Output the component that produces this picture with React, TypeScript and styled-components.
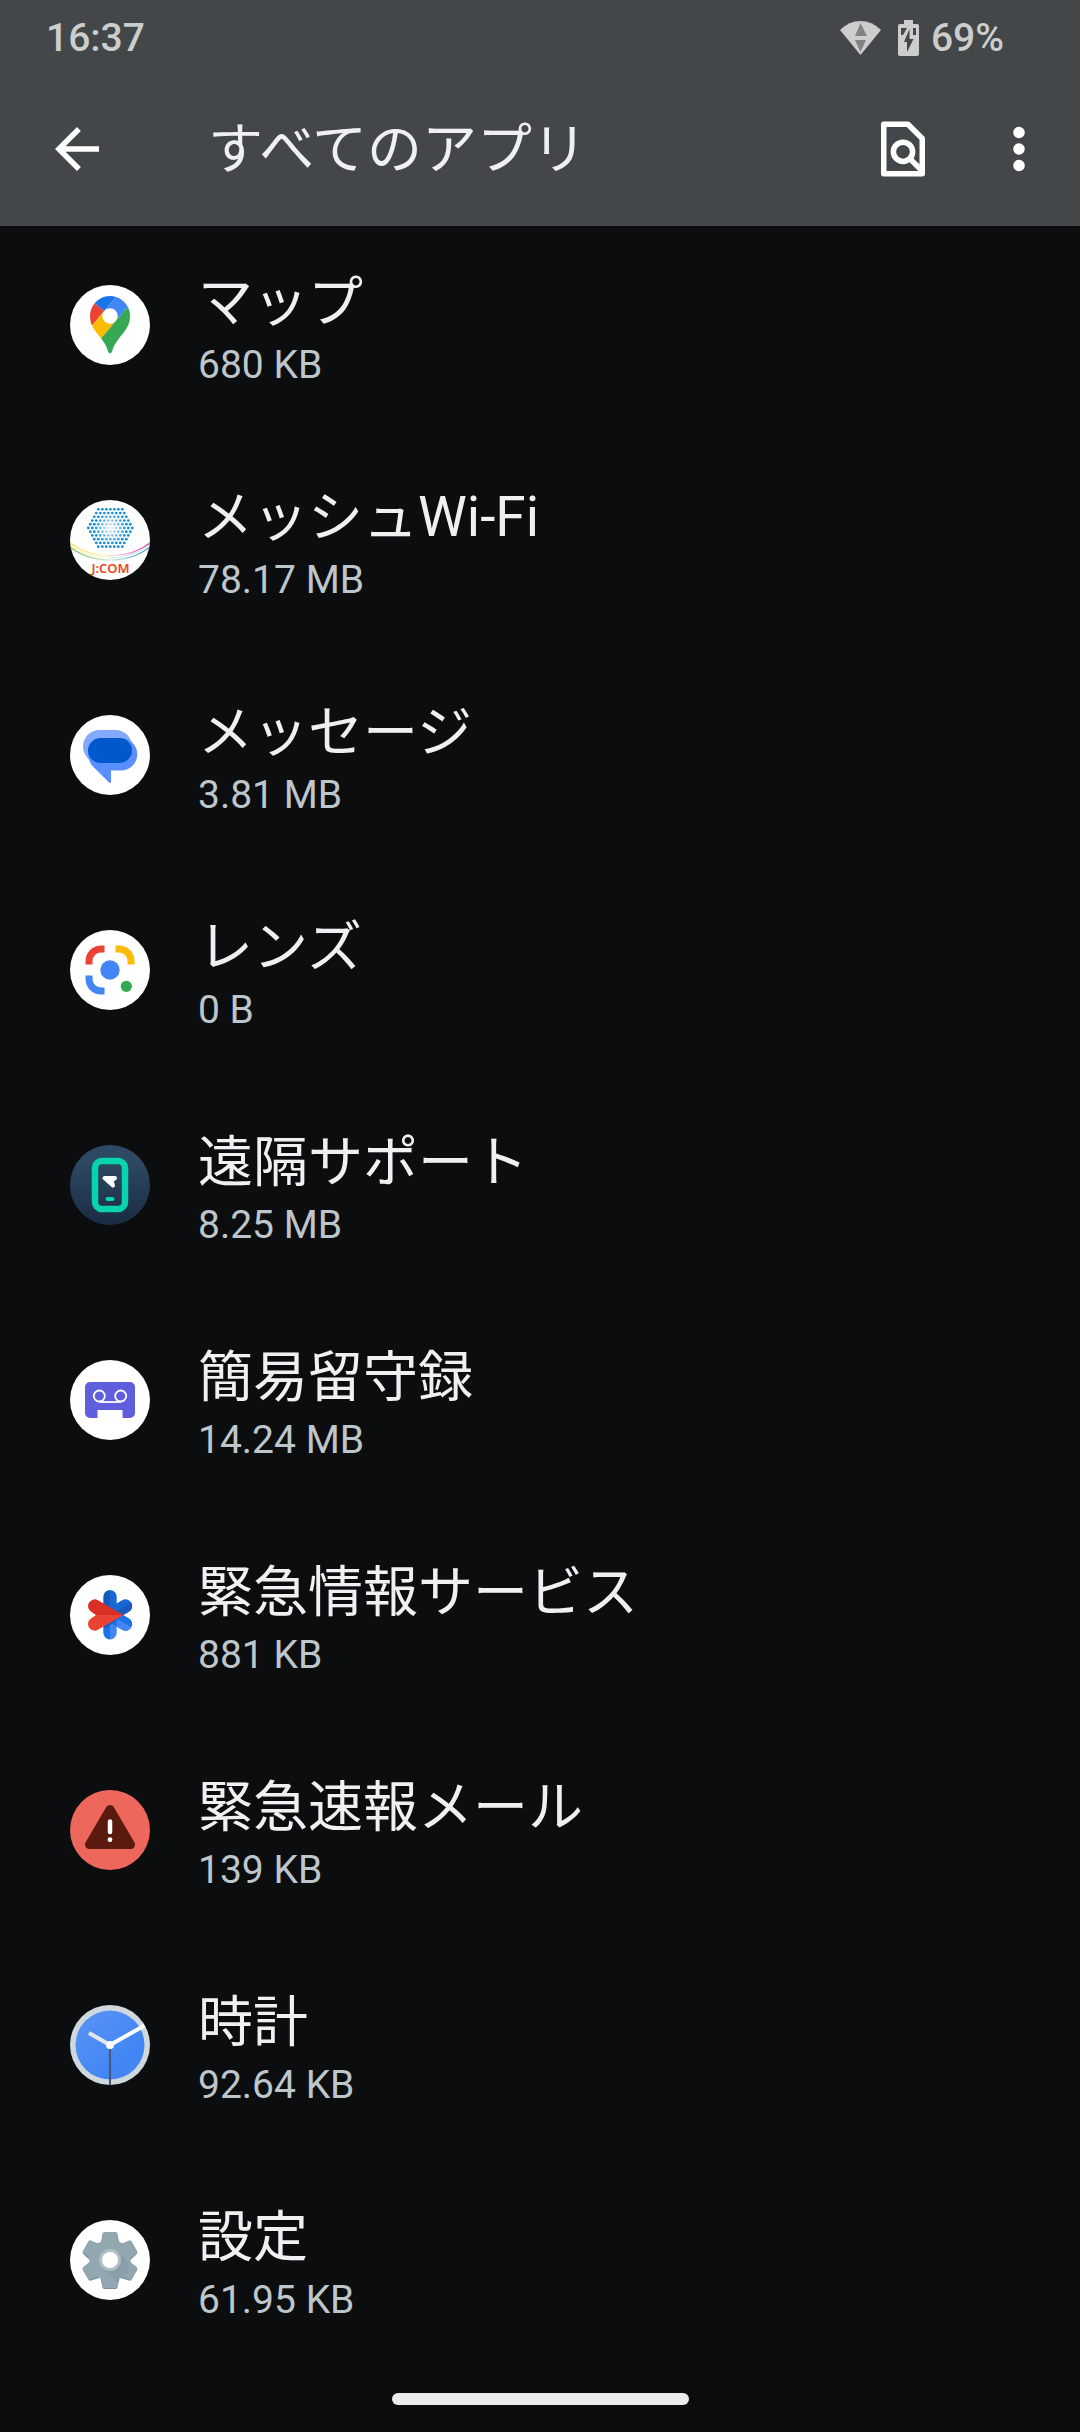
import React from "react";
import styled, { createGlobalStyle } from "styled-components";

const GlobalStyle = createGlobalStyle`
  *, *::before, *::after { box-sizing: border-box; }
  body {
    margin: 0;
    background: #0b0d0f;
    font-family: Roboto, "Noto Sans CJK JP", sans-serif;
  }
`;

const Screen = styled.div`
  display: flex;
  flex-direction: column;
  min-height: 100vh;
  background: #0b0d0f;
`;

const Header = styled.header`
  background: #434749;
  color: #ffffff;
`;

const StatusBar = styled.div`
  display: flex;
  align-items: center;
  justify-content: space-between;
  height: 72px;
  padding: 4px 76px 0 46px;
  font-size: 39px;
  line-height: 45px;
  font-weight: 500;
  color: #cccdcd;
`;

const StatusIcons = styled.div`
  display: flex;
  align-items: center;
  gap: 12px;
  svg { display: block; }
`;

const BatteryIcon = styled.span`
  display: flex;
  padding-left: 5px;
`;

const AppBar = styled.div`
  display: flex;
  align-items: center;
  height: 154px;
  padding: 0 28px 0 44px;
`;

const IconButton = styled.button`
  display: flex;
  flex: none;
  padding: 0;
  border: 0;
  background: none;
  color: inherit;
  svg { width: 66px; height: 66px; }
`;

const Title = styled.h1`
  flex: 1;
  margin: 0;
  padding-left: 98px;
  font-size: 55px;
  line-height: 64px;
  font-weight: 400;
  color: #f0f0f3;
`;

const Actions = styled.div`
  display: flex;
  gap: 50px;
`;

const List = styled.ul`
  display: flex;
  flex: 1;
  flex-direction: column;
  gap: 89px;
  margin: 0;
  padding: 36px 70px 0;
  list-style: none;
`;

const AppLink = styled.a`
  display: flex;
  align-items: center;
  gap: 48px;
  color: inherit;
  text-decoration: none;
`;

const AppIcon = styled.svg`
  flex: none;
  width: 80px;
  height: 80px;
`;

const AppText = styled.span`
  display: flex;
  flex-direction: column;
`;

const AppName = styled.span`
  font-size: 55px;
  line-height: 81px;
  color: #f0f0f3;
`;

const AppSize = styled.span`
  font-size: 39px;
  line-height: 45px;
  color: #bdc7cb;
`;

const NavBar = styled.footer`
  display: flex;
  justify-content: center;
  padding: 24px 0 27px;
`;

const HomePill = styled.span`
  width: 297px;
  height: 12px;
  border-radius: 6px;
  background: #ececec;
`;

const White = () => <circle cx="40" cy="40" r="40" fill="#fff" />;

const MapsIcon = () => (
  <>
    <White />
    <g transform="translate(20 11) scale(.4334)">
      <path fill="#1a73e8" d="M60.2 2.2C55.8.8 51 0 46.1 0 32 0 19.3 6.4 10.8 16.5l21.8 18.3L60.2 2.2z" />
      <path fill="#ea4335" d="M10.8 16.5C4.1 24.5 0 34.9 0 46.1c0 8.7 1.7 15.7 4.6 22l28-33.3-21.8-18.3z" />
      <path fill="#4285f4" d="M46.2 28.5c9.8 0 17.7 7.9 17.7 17.7 0 4.3-1.6 8.3-4.2 11.4 0 0 13.9-16.6 27.5-32.7-5.6-10.8-15.3-19-27-22.7L32.6 34.8c3.3-3.8 8.1-6.3 13.6-6.3" />
      <path fill="#fbbc04" d="M46.2 63.8c-9.8 0-17.7-7.9-17.7-17.7 0-4.3 1.5-8.3 4.1-11.3l-28 33.3c4.8 10.6 12.8 19.2 21 29.9l34.1-40.5c-3.3 3.9-8.1 6.3-13.5 6.3" />
      <path fill="#34a853" d="M59.1 109.2c15.4-24.1 33.3-35 33.3-63 0-7.7-1.9-14.9-5.2-21.3L25.6 98c2.6 3.4 5.3 7.3 7.9 11.3 9.4 14.5 6.8 23.1 12.8 23.1s3.4-8.7 12.8-23.2" />
    </g>
  </>
);

const hexDots = Array.from({ length: 11 }, (_, row) => {
  const count = 12 - Math.abs(row - 5);
  return Array.from({ length: count }, (_, i) => {
    const x = (i - (count - 1) / 2) * 4;
    const y = (row - 5) * 3.73;
    return { x, y, alpha: Math.min(1, Math.hypot(x, y) / 17 + 0.05) };
  });
}).flat();

const MeshIcon = () => (
  <>
    <defs>
      <linearGradient id="swooshTop">
        <stop offset="0" stopColor="#f2dc3c" />
        <stop offset=".4" stopColor="#fdf3d0" />
        <stop offset=".6" stopColor="#f6c6e4" />
        <stop offset="1" stopColor="#e0359b" />
      </linearGradient>
      <linearGradient id="swooshBottom">
        <stop offset="0" stopColor="#6dbb5c" />
        <stop offset=".5" stopColor="#cfe9cf" />
        <stop offset="1" stopColor="#3f97d3" />
      </linearGradient>
      <clipPath id="meshClip"><circle cx="40" cy="40" r="40" /></clipPath>
    </defs>
    <White />
    {hexDots.map((d, i) => (
      <circle key={i} cx={40.3 + d.x} cy={28 + d.y} r="1.4" fill="#1590d4" opacity={d.alpha} />
    ))}
    <g clipPath="url(#meshClip)" fill="none" strokeWidth="1.2">
      <path stroke="url(#swooshTop)" d="M0 43Q17 55 40 55.500T80 43" />
      <path stroke="#f9eca0" strokeWidth=".8" d="M0 45Q17 57 40 57" />
      <path stroke="#b9dcf3" strokeWidth=".8" d="M40 58Q63 57 80 45" />
      <path stroke="url(#swooshBottom)" d="M0 47Q17 60 40 60T80 47" />
    </g>
    <text x="40.500" y="73" textAnchor="middle" fontFamily="Noto Sans, sans-serif" fontSize="13" fontWeight="600" fill="#ef4423">J:COM</text>
  </>
);

const MessagesIcon = () => (
  <>
    <White />
    <rect x="13" y="15" width="49" height="33" rx="16.500" fill="#85a9ff" />
    <path fill="#5a8fff" d="M34 23H51a16 16 0 0 1 0 32.500H41V67a1 1 0 0 1-1.700.7L22.500 51Q18 46 18 39A16 16 0 0 1 34 23Z" />
    <rect x="18" y="23" width="44" height="25" rx="12.500" fill="#0059cc" />
  </>
);

const LensIcon = () => (
  <>
    <White />
    <g fill="none" strokeWidth="7">
      <path stroke="#ea4335" d="M19 34.500V31A12 12 0 0 1 31 19H34.500" />
      <path stroke="#fbbc04" d="M45.500 19H49A12 12 0 0 1 61 31V34.500" />
      <path stroke="#4285f4" d="M19 45.500V49A12 12 0 0 0 31 61H34.500" />
    </g>
    <circle cx="40" cy="40" r="9.700" fill="#4285f4" />
    <circle cx="56.300" cy="56.300" r="5.600" fill="#34a853" />
  </>
);

const RemoteIcon = () => (
  <>
    <defs>
      <linearGradient id="remoteBg" x2="0" y2="1">
        <stop offset=".2" stopColor="#2e4964" />
        <stop offset="1" stopColor="#1a2b42" />
      </linearGradient>
    </defs>
    <circle cx="40" cy="40" r="40" fill="url(#remoteBg)" />
    <rect x="25" y="16" width="30" height="48" rx="7" fill="none" stroke="#07d3ad" strokeWidth="6.500" />
    <path d="M34.500 33H45L41.500 35.500L43 40.500Z" fill="#fff" stroke="#fff" strokeWidth="4" strokeLinejoin="round" />
    <path d="M37.500 54H42.500" stroke="#07d3ad" strokeWidth="4" strokeLinecap="round" />
  </>
);

const VoicemailIcon = () => (
  <>
    <White />
    <path fill="#5f5fde" d="M20 22H60a5 5 0 0 1 5 5V53a5 5 0 0 1-5 5H52.500V50H27.500V58H20a5 5 0 0 1-5-5V27a5 5 0 0 1 5-5Z" />
    <g fill="none" stroke="#fff" strokeWidth="1.800">
      <circle cx="29.300" cy="36" r="5.500" />
      <circle cx="50.700" cy="36" r="5.500" />
      <path d="M29.300 42H50.700" />
    </g>
  </>
);

const SafetyIcon = () => (
  <>
    <White />
    <path fill="#185abc" d="M40 15A6.700 6.700 0 0 0 33.300 21.700V40H40Z" />
    <path fill="#1967d2" d="M40 15A6.700 6.700 0 0 1 46.700 21.700V40H40Z" />
    <path fill="#1a73e8" d="M40 64.500A6.700 6.700 0 0 1 33.300 57.800V40H40Z" />
    <path fill="#4285f4" d="M40 64.500A6.700 6.700 0 0 0 46.700 57.800V40H40Z" />
    <path stroke="#1967d2" strokeWidth="13.400" strokeLinecap="round" d="M40 40L55.500 31" />
    <path fill="#185abc" d="M40 40L61.300 27.700A6.700 6.700 0 0 1 58.900 36.800L48 43Z" />
    <path stroke="#1a73e8" strokeWidth="13.400" strokeLinecap="round" d="M40 40L55.500 49" />
    <path fill="#4285f4" d="M46.700 43.800L61.300 52.300A6.700 6.700 0 0 1 52.200 54.800L46.700 51.600Z" />
    <path fill="#174ea6" opacity=".6" d="M53.500 40L33 52L36 53Z" />
    <path fill="#d93025" d="M27.900 25.200L53.500 40H26L21.200 36.800A6.700 6.700 0 0 1 27.900 25.200Z" />
    <path fill="#ea4335" d="M26 40H53.500L27.900 54.800A6.700 6.700 0 0 1 21.200 43.200Z" />
  </>
);

const AlertIcon = () => (
  <>
    <circle cx="40" cy="40" r="40" fill="#ee675c" />
    <path d="M40 19.500L60.500 54.500H19.500Z" fill="#5b1a0e" stroke="#5b1a0e" strokeWidth="9" strokeLinejoin="round" />
    <path d="M40 31.500V42" stroke="#fff" strokeWidth="4.500" strokeLinecap="round" />
    <circle cx="40" cy="49.700" r="2.400" fill="#fff" />
  </>
);

const ClockIcon = () => (
  <>
    <defs>
      <linearGradient id="clockFace" x2="1" y2="1">
        <stop offset="0" stopColor="#5a95f5" />
        <stop offset=".7" stopColor="#4285f4" />
      </linearGradient>
    </defs>
    <circle cx="40" cy="40" r="40" fill="#cfd8dc" />
    <circle cx="40" cy="40" r="34.500" fill="url(#clockFace)" />
    <path d="M40 40V80" stroke="#44587c" strokeWidth="2" />
    <path d="M40 40L19 28" stroke="#e3e6ea" strokeWidth="4" />
    <path d="M40 40L74.500 20.500" stroke="#fff" strokeWidth="4" />
    <circle cx="40" cy="40" r="4" fill="#fff" />
  </>
);

const SettingsIcon = () => (
  <>
    <White />
    <g transform="translate(40 40)">
      <g fill="#78909c" transform="translate(0 1)">
        {[0, 60, 120, 180, 240, 300].map((a) => (
          <path key={a} transform={`rotate(${a})`} d="M-6-28H6L7.300-27L9.500-17H-9.500L-7.300-27Z" />
        ))}
      </g>
      <circle r="20.500" fill="#93a7b0" />
      {[0, 60, 120, 180, 240, 300].map((a) => (
        <path key={a} fill="#93a7b0" transform={`rotate(${a})`} d="M-6-28H6L7.300-27L8-20L10-17H-10L-8-20L-7.300-27Z" />
      ))}
      <path fill="#78909c" opacity=".35" d="M8-8L19 3L18 13L13 16L7 22L-8 8Z" />
      <circle r="11" fill="#b0bec5" />
      <circle r="8" fill="#fff" />
    </g>
  </>
);

const apps = [
  { name: "マップ", size: "680 KB", Icon: MapsIcon },
  { name: "メッシュWi-Fi", size: "78.17 MB", Icon: MeshIcon },
  { name: "メッセージ", size: "3.81 MB", Icon: MessagesIcon },
  { name: "レンズ", size: "0 B", Icon: LensIcon },
  { name: "遠隔サポート", size: "8.25 MB", Icon: RemoteIcon },
  { name: "簡易留守録", size: "14.24 MB", Icon: VoicemailIcon },
  { name: "緊急情報サービス", size: "881 KB", Icon: SafetyIcon },
  { name: "緊急速報メール", size: "139 KB", Icon: AlertIcon },
  { name: "時計", size: "92.64 KB", Icon: ClockIcon },
  { name: "設定", size: "61.95 KB", Icon: SettingsIcon },
];

export default function App() {
  return (
    <Screen lang="ja">
      <GlobalStyle />
      <Header>
        <StatusBar>
          <span>16:37</span>
          <StatusIcons>
            <svg width="41" height="36" viewBox="0 0 41 36" aria-hidden="true">
              <path fill="#cccdcd" d="M0 10Q9 1 20.500 1T41 10L20.500 35Z" />
              <path fill="#808383" d="M20.500 3L27 16H15ZM15 20H26L20.500 32Z" />
            </svg>
            <BatteryIcon>
              <svg width="21" height="36" viewBox="0 0 21 36" aria-hidden="true">
                <path fill="#cccdcd" d="M6 0H15V4H19a2 2 0 0 1 2 2V34a2 2 0 0 1-2 2H2a2 2 0 0 1-2-2V6a2 2 0 0 1 2-2H6Z" />
                <path fill="#434749" d="M3 8H9L5 15H3ZM15 8H18V15H15ZM11.500 9V19H15.500L9 32V22H6Z" />
              </svg>
            </BatteryIcon>
            <span>69%</span>
          </StatusIcons>
        </StatusBar>
        <AppBar>
          <IconButton type="button" aria-label="戻る">
            <svg viewBox="0 0 24 24" fill="currentColor">
              <path d="M20 11H7.830l5.590-5.590L12 4l-8 8 8 8 1.410-1.410L7.830 13H20v-2z" />
            </svg>
          </IconButton>
          <Title>すべてのアプリ</Title>
          <Actions>
            <IconButton type="button" aria-label="検索">
              <svg viewBox="0 0 24 24" fill="none" stroke="currentColor" strokeWidth="2">
                <path strokeLinejoin="round" d="M5 3H13.800L19 8.200V21H5Z" />
                <circle cx="12" cy="13" r="3.500" />
                <path d="M14.300 15.300L19 20" />
              </svg>
            </IconButton>
            <IconButton type="button" aria-label="その他">
              <svg viewBox="0 0 24 24" fill="currentColor">
                <circle cx="12" cy="6" r="2.100" />
                <circle cx="12" cy="12" r="2.100" />
                <circle cx="12" cy="18" r="2.100" />
              </svg>
            </IconButton>
          </Actions>
        </AppBar>
      </Header>
      <List>
        {apps.map(({ name, size, Icon }) => (
          <li key={name}>
            <AppLink href="#">
              <AppIcon viewBox="0 0 80 80" aria-hidden="true"><Icon /></AppIcon>
              <AppText>
                <AppName>{name}</AppName>
                <AppSize>{size}</AppSize>
              </AppText>
            </AppLink>
          </li>
        ))}
      </List>
      <NavBar>
        <HomePill />
      </NavBar>
    </Screen>
  );
}
